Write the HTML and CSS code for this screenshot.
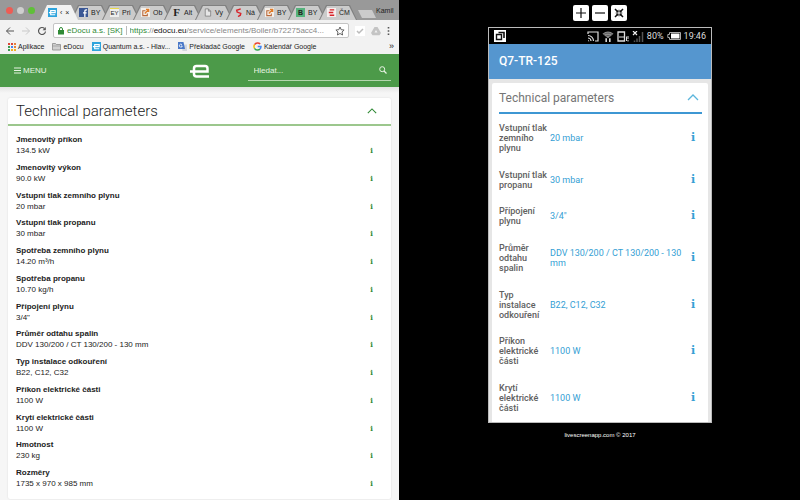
FILE: index.html
```
<!DOCTYPE html>
<html lang="cs">
<head>
  <meta charset="UTF-8">
  <meta name="viewport" content="width=device-width, initial-scale=1.0">
  <title>eDocu a.s. - Technical parameters</title>
  <link rel="stylesheet" href="styles.css">
</head>
<body>
  <svg class="defs" width="0" height="0" aria-hidden="true">
    <symbol id="edocu" viewBox="0 0 10 10">
      <rect width="10" height="10" fill="#2fa4dc"/>
      <path d="M1 5.200h7V3H3v4.500h5" fill="none" stroke="#fff" stroke-width="1.300"/>
    </symbol>
    <symbol id="edit" viewBox="0 0 10 10">
      <rect width="10" height="10" fill="#f4efe9"/>
      <path d="M5 3H2v5.500h5V6" fill="none" stroke="#b8683a" stroke-width="1.200"/>
      <path d="M4.200 6l4-4M5.500 1.500h3v3" fill="none" stroke="#e07b28" stroke-width="1.500"/>
    </symbol>
    <symbol id="chevron" viewBox="0 0 12 7">
      <path d="M1 6l5-5 5 5" fill="none" stroke="currentColor" stroke-width="1.300"/>
    </symbol>
  </svg>

  <main class="split">
    <section class="browser">
      <div class="tab-bar">
        <div class="lights"><span class="light red"></span><span class="light grey"></span><span class="light green"></span></div>
        <div class="tabs">
          <div class="tab active"><svg class="favicon"><use href="#edocu"/></svg><span class="tab-title">‹</span><span class="close">×</span></div>
          <div class="tab"><svg class="favicon" viewBox="0 0 10 10"><rect width="10" height="10" fill="#3a5795"/><path d="M6.500 10V3.500q0-1.500 2.500-1.300M4.500 5.500h4" fill="none" stroke="#fff" stroke-width="1.400"/></svg><span class="tab-title">BY</span></div>
          <div class="tab"><span class="favicon letter ey">EY</span><span class="tab-title">Pri</span></div>
          <div class="tab"><svg class="favicon"><use href="#edit"/></svg><span class="tab-title">Ob</span></div>
          <div class="tab"><span class="favicon letter serif">F</span><span class="tab-title">Alt</span></div>
          <div class="tab"><svg class="favicon" viewBox="0 0 10 10"><path d="M2.500 1h3.500l2.500 2.500V9h-6zM6 1v2.500h2.500" fill="#e6e6e6" stroke="#777" stroke-width=".8"/></svg><span class="tab-title">Vy</span></div>
          <div class="tab"><svg class="favicon" viewBox="0 0 10 10"><path d="M7.500 1L3 2.500l.5 2 4 1.500L7 8 4.500 9.500" fill="none" stroke="#d8232a" stroke-width="1.600"/></svg><span class="tab-title">Ná</span></div>
          <div class="tab"><svg class="favicon"><use href="#edit"/></svg><span class="tab-title">BY</span></div>
          <div class="tab"><span class="favicon letter bold-b">B</span><span class="tab-title">BY</span></div>
          <div class="tab"><svg class="favicon" viewBox="0 0 10 10"><rect width="10" height="10" fill="#f6eeee"/><path d="M3 2h5M2 5h5M3 8h5" stroke="#d8232a" stroke-width="1.500"/></svg><span class="tab-title">ČM</span></div>
          <span class="new-tab"></span>
        </div>
        <span class="user">Kamil</span>
      </div>

      <div class="toolbar">
        <button class="tool" type="button" aria-label="Back"><svg viewBox="0 0 10 10"><path d="M9 5H1.500M5 1.500L1.500 5 5 8.500" fill="none" stroke="#555"/></svg></button>
        <button class="tool" type="button" aria-label="Forward"><svg viewBox="0 0 10 10"><path d="M1 5h7.500M5 1.500L8.500 5 5 8.500" fill="none" stroke="#c9c9c9"/></svg></button>
        <button class="tool" type="button" aria-label="Reload"><svg viewBox="0 0 10 10"><path d="M7.500 2.500A3.500 3.500 0 1 0 8.500 5.500" fill="none" stroke="#555" stroke-width="1.200"/><path d="M8.800 1v3.200H5.600z" fill="#555"/></svg></button>
        <div class="omnibox">
          <svg class="lock" viewBox="0 0 6 8"><rect y="3" width="6" height="4.500" fill="#2f8a35"/><path d="M1.500 3.500V2a1.500 1.500 0 0 1 3 0v1.500" fill="none" stroke="#2f8a35"/></svg>
          <span class="secure">eDocu a.s. [SK]</span>
          <span class="url"><span class="scheme">https:</span>//<span class="host">edocu.eu</span>/service/elements/Boiler/b72275acc4...</span>
          <svg class="star" viewBox="0 0 10 10"><path d="M5 1l1.200 2.700 2.900.3L7 6l.6 3L5 7.500 2.400 9 3 6 .9 4l2.900-.3z" fill="none" stroke="#555" stroke-width=".9"/></svg>
        </div>
        <svg class="ext" viewBox="0 0 10 10"><rect width="10" height="10" fill="#fff"/><path d="M2 5l2 2 4-4" fill="none" stroke="#bbb" stroke-width="1.500"/></svg>
        <svg class="ext" viewBox="0 0 10 10"><path d="M3.500 1h3L10 7 8.500 9.200h-7L0 7z" fill="#c4c4c4"/><path d="M5 4l1.500 2.500h-3z" fill="#f2f2f2"/></svg>
        <svg class="dots" viewBox="0 0 3 10"><path d="M.7 1h1.600v1.600H.7zM.7 4.200h1.600v1.600H.7zM.7 7.400h1.600V9H.7z" fill="#555"/></svg>
      </div>

      <nav class="bookmarks">
        <a href="#"><svg viewBox="0 0 9 9"><path d="M1 1h2v2H1zM4 1h2v2H4z" fill="#dc4437"/><path d="M7 1h2v2H7zM7 4h2v2H7z" fill="#e8803a"/><path d="M1 4h2v2H1zM1 7h2v2H1z" fill="#3a9a50"/><path d="M4 4h2v2H4z" fill="#4285f4"/><path d="M4 7h2v2H4zM7 7h2v2H7z" fill="#f0b020"/></svg>Aplikace</a>
        <a href="#"><svg viewBox="0 0 9 9"><path d="M.5 1.500h3l.8 1h4.200v5.500h-8z" fill="#d0d0d0" stroke="#8c8c8c" stroke-width=".8"/><path d="M.5 4h8" stroke="#8c8c8c" stroke-width=".6"/></svg>eDocu</a>
        <a href="#"><svg><use href="#edocu"/></svg>Quantum a.s. - Hlav...</a>
        <a href="#"><svg viewBox="0 0 9 9"><path d="M3.500 2.500H9V9H4.500z" fill="#d2d6de"/><path d="M0 0h5.500L7 7H0z" fill="#4a78c8"/><path d="M4 2.700a1.500 1.500 0 1 0 .3 1.300H3" fill="none" stroke="#fff" stroke-width=".8"/></svg>Překladač Google</a>
        <a href="#"><svg viewBox="0 0 9 9" fill="none" stroke-width="1.500"><path d="M7.200 2A3.600 3.600 0 0 0 1.500 2.700" stroke="#ea4335"/><path d="M1.500 2.700a3.600 3.600 0 0 0 0 3.600" stroke="#fbbc05"/><path d="M1.500 6.300a3.600 3.600 0 0 0 5.500.8" stroke="#34a853"/><path d="M7 7.100a3.600 3.600 0 0 0 1-2.500H4.700" stroke="#4285f4"/></svg>Kalendář Google</a>
        <span class="more">»</span>
      </nav>

      <header class="site-header">
        <button class="menu" type="button"><svg viewBox="0 0 7 7"><path d="M0 1h7M0 3.500h7M0 6h7" stroke="currentColor"/></svg>MENU</button>
        <svg class="logo" viewBox="0 0 20 14"><path d="M0 7.500h17.500V4.500q0-2.500-2.500-2.500H6.500Q4 2 4 4.500V10q0 2.500 2.500 2.500H19" fill="none" stroke="#fff" stroke-width="2.500"/></svg>
        <form class="search">
          <input type="search" aria-label="Hledat" placeholder="Hledat...">
          <button type="button" aria-label="Search"><svg viewBox="0 0 8 8"><circle cx="3.200" cy="3.200" r="2.500" fill="none" stroke="currentColor"/><path d="M5 5l2.500 2.500" stroke="currentColor" stroke-width="1.200"/></svg></button>
        </form>
      </header>

      <div class="page">
        <article class="card">
          <div class="card-head"><h1>Technical parameters</h1><svg class="chevron"><use href="#chevron"/></svg></div>
          <dl class="params">
            <div class="param"><dt>Jmenovitý příkon</dt><dd>134.5 kW <b class="info">i</b></dd></div>
            <div class="param"><dt>Jmenovitý výkon</dt><dd>90.0 kW <b class="info">i</b></dd></div>
            <div class="param"><dt>Vstupní tlak zemního plynu</dt><dd>20 mbar <b class="info">i</b></dd></div>
            <div class="param"><dt>Vstupní tlak propanu</dt><dd>30 mbar <b class="info">i</b></dd></div>
            <div class="param"><dt>Spotřeba zemního plynu</dt><dd>14.20 m³/h <b class="info">i</b></dd></div>
            <div class="param"><dt>Spotřeba propanu</dt><dd>10.70 kg/h <b class="info">i</b></dd></div>
            <div class="param"><dt>Přípojení plynu</dt><dd>3/4" <b class="info">i</b></dd></div>
            <div class="param"><dt>Průměr odtahu spalin</dt><dd>DDV 130/200 / CT 130/200 - 130 mm <b class="info">i</b></dd></div>
            <div class="param"><dt>Typ instalace odkouření</dt><dd>B22, C12, C32 <b class="info">i</b></dd></div>
            <div class="param"><dt>Příkon elektrické části</dt><dd>1100 W <b class="info">i</b></dd></div>
            <div class="param"><dt>Krytí elektrické části</dt><dd>1100 W <b class="info">i</b></dd></div>
            <div class="param"><dt>Hmotnost</dt><dd>230 kg <b class="info">i</b></dd></div>
            <div class="param"><dt>Rozměry</dt><dd>1735 x 970 x 985 mm <b class="info">i</b></dd></div>
          </dl>
        </article>
      </div>
    </section>

    <section class="stage">
      <div class="zoom-buttons">
        <button type="button" aria-label="Zoom in"><svg viewBox="0 0 16 16"><path d="M3 8h10M8 3v10" stroke="#111" stroke-width="1.200"/></svg></button>
        <button type="button" aria-label="Zoom out"><svg viewBox="0 0 16 16"><path d="M3 8h10" stroke="#111" stroke-width="1.200"/></svg></button>
        <button type="button" aria-label="Fit"><svg viewBox="0 0 16 16"><path d="M4 4l3 3M12 4L9 7M4 12l3-3M12 12L9 9" stroke="#111" stroke-width="1.500"/><path d="M7.500 4.500v3h-3zM8.500 4.500v3h3zM7.500 11.500v-3h-3zM8.500 11.500v-3h3z" fill="#111"/></svg></button>
      </div>

      <div class="phone">
        <div class="status">
          <svg class="app-icon" viewBox="0 0 12 12"><rect width="12" height="12" fill="#fff"/><path d="M2.500 4.500h5v5h-5z" fill="none" stroke="#111" stroke-width="1.400"/><path d="M4.500 2.500h5.500V8" fill="none" stroke="#111" stroke-width="1.600"/></svg>
          <svg class="cast" viewBox="0 0 12 11"><path d="M1 3V1h10v9H8" fill="none" stroke="#ddd" stroke-width="1.200"/><path d="M1 4.500A5.500 5.500 0 0 1 6.500 10M1 7a3 3 0 0 1 3 3" fill="none" stroke="#ddd" stroke-width="1.200"/><path d="M1 8.800l1.400 1.400H1z" fill="#ddd"/></svg>
          <svg class="wifi" viewBox="0 0 12 12"><path d="M0 3q6-5 12 0L6 8z" fill="#8c8c8c"/><path d="M1 4q5-3.500 10 0M3 5.800q3-2 6 0" fill="none" stroke="#333" stroke-width=".6"/><path d="M4 8v4M8 8v4" stroke="#eee" stroke-width="1.600"/></svg>
          <svg class="sim" viewBox="0 0 12 11"><path d="M1 1h6.500v9H1z" fill="none" stroke="#ddd" stroke-width="1.300"/><path d="M2 6h5" stroke="#ddd"/><path d="M9.500 5.500V10M11 5v3M11 9v1.500" stroke="#ddd"/></svg>
          <svg class="signal" viewBox="0 0 12 11"><path d="M1 0l4 4M5 0L1 4" stroke="#eee" stroke-width="1.200"/><path d="M2.500 11V9.500M5 11V7.500M7.500 11V5M10.500 11V1" stroke="#555" stroke-width="1.500"/></svg>
          <span class="percent">80%</span>
          <svg class="battery" viewBox="0 0 14 8"><path d="M2.500.5h11v7h-11V5.500H.8v-3h1.700z" fill="none" stroke="#aaa"/><path d="M4 1.500h8.500v5H4z" fill="#fff"/></svg>
          <time>19:46</time>
        </div>
        <header class="app-bar">Q7-TR-125</header>
        <div class="app-body">
          <article class="app-card">
            <div class="app-head"><h2>Technical parameters</h2><svg class="chevron"><use href="#chevron"/></svg></div>
            <dl class="app-params">
              <div class="app-param"><dt>Vstupní tlak zemního plynu</dt><dd>20 mbar</dd><dd class="app-info">i</dd></div>
              <div class="app-param"><dt>Vstupní tlak propanu</dt><dd>30 mbar</dd><dd class="app-info">i</dd></div>
              <div class="app-param"><dt>Přípojení plynu</dt><dd>3/4"</dd><dd class="app-info">i</dd></div>
              <div class="app-param"><dt>Průměr odtahu spalin</dt><dd>DDV 130/200 / CT 130/200 - 130 mm</dd><dd class="app-info">i</dd></div>
              <div class="app-param"><dt>Typ instalace odkouření</dt><dd>B22, C12, C32</dd><dd class="app-info">i</dd></div>
              <div class="app-param"><dt>Příkon elektrické části</dt><dd>1100 W</dd><dd class="app-info">i</dd></div>
              <div class="app-param"><dt>Krytí elektrické části</dt><dd>1100 W</dd><dd class="app-info">i</dd></div>
            </dl>
          </article>
        </div>
      </div>
      <footer class="credit">livescreenapp.com © 2017</footer>
    </section>
  </main>
</body>
</html>
```

FILE: styles.css
```
* {
  box-sizing: border-box;
}

body {
  margin: 0;
  font-family: "Liberation Sans", Arial, sans-serif;
  font-size: 8px;
  line-height: 11px;
  color: #222;
  background: #000;
}

h1, h2, dl, dd {
  margin: 0;
}

button {
  padding: 0;
  border: none;
  background: none;
  color: inherit;
  font: inherit;
  cursor: pointer;
}

svg {
  display: block;
  flex: none;
}

.defs {
  position: absolute;
}

.split {
  display: grid;
  grid-template-columns: 1fr 1fr;
  min-height: 100vh;
}

/* browser window */
.browser {
  display: flex;
  flex-direction: column;
  min-width: 0;
  margin-right: 1px;
  background: #f2f2f2;
}

.tab-bar {
  display: flex;
  align-items: flex-end;
  height: 20px;
  padding: 0 6px;
  background: #999;
}

.lights {
  display: flex;
  gap: 4px;
  padding: 0 5px 6px 0;
}

.light {
  width: 7px;
  height: 7px;
  border-radius: 50%;
}

.red { background: #ee5c54; }
.grey { background: #cfcfcf; }
.green { background: #5fc038; }

.tabs {
  position: relative;
  z-index: 0;
  display: flex;
  flex: 1;
}

.tab {
  position: relative;
  display: flex;
  align-items: center;
  gap: 3px;
  width: 38px;
  height: 15px;
  margin-right: -7px;
  padding-left: 8px;
  font-size: 7px;
  white-space: nowrap;
}

.tab::before,
.tab::after {
  content: "";
  position: absolute;
  inset: 0;
  z-index: -1;
  background: #808080;
  clip-path: polygon(7px 0, calc(100% - 7px) 0, 100% 100%, 0 100%);
}

.tab::after {
  inset: 1px 1px 0;
  background: #cbcbcb;
}

.active::before,
.active::after {
  z-index: 0;
  background: #f2f2f2;
}

.active > * {
  position: relative;
  z-index: 1;
}

.favicon {
  flex: none;
  width: 9px;
  height: 9px;
}

.letter {
  line-height: 9px;
  text-align: center;
}

.ey {
  font-size: 6px;
  background: #eee;
  border-top: 1px solid #e8d84a;
}

.serif {
  font-family: "Liberation Serif", serif;
  font-size: 11px;
  font-weight: bold;
}

.bold-b {
  background: #55b27c;
  font-weight: bold;
}

.new-tab {
  width: 18px;
  height: 8px;
  margin: 5px 0 0 8px;
  background: #cbcbcb;
  clip-path: polygon(0 0, 14px 0, 100% 100%, 4px 100%);
}

.user {
  padding-bottom: 4px;
  font-size: 7px;
}

.toolbar {
  display: flex;
  align-items: center;
  gap: 6px;
  padding: 3px 9px 0 5px;
}

.tool svg,
.star,
.ext {
  width: 10px;
  height: 10px;
}

.omnibox {
  display: flex;
  flex: 1;
  align-items: center;
  min-width: 0;
  height: 15px;
  padding: 0 3px 0 4px;
  border: 1px solid #c4c4c4;
  border-radius: 2px;
  background: #fff;
  white-space: nowrap;
}

.lock {
  width: 6px;
  height: 8px;
}

.secure {
  margin: 0 3px;
  padding-right: 3px;
  border-right: 1px solid #bbb;
  line-height: 9px;
  color: #2f8a35;
}

.url {
  flex: 1;
  min-width: 0;
  overflow: hidden;
  color: #888;
}

.scheme { color: #2f8a35; }
.host { color: #111; }

.dots {
  width: 3px;
  height: 10px;
}

.bookmarks {
  display: flex;
  align-items: center;
  gap: 8px;
  height: 16px;
  padding: 0 5px 0 7px;
  font-size: 7px;
  white-space: nowrap;
}

.bookmarks a {
  display: flex;
  align-items: center;
  gap: 2px;
  color: #222;
  text-decoration: none;
}

.bookmarks svg {
  width: 9px;
  height: 9px;
}

.more {
  margin-left: auto;
  font-size: 9px;
}

/* green site header */
.site-header {
  display: grid;
  grid-template-columns: 1fr auto 1fr;
  align-items: center;
  height: 33px;
  padding: 0 8px;
  background: #4c9a49;
  color: #e6f2e2;
}

.menu {
  display: flex;
  align-items: center;
  gap: 2px;
  padding-left: 6px;
}

.menu svg {
  width: 7px;
  height: 7px;
}

.logo {
  width: 20px;
  height: 14px;
}

.search {
  display: flex;
  align-items: center;
  height: 20px;
  margin-left: 38px;
  padding: 0 4px 0 6px;
  border-bottom: 1px solid #b4d6ae;
}

.search input {
  flex: 1;
  min-width: 0;
  padding: 0;
  border: none;
  background: none;
  color: inherit;
  font: inherit;
}

.search input::placeholder {
  color: #e6f2e2;
}

.search svg {
  width: 8px;
  height: 8px;
}

.page {
  display: flex;
  flex: 1;
  flex-direction: column;
  padding: 11px 8px 1px;
  background: linear-gradient(#e4e4e4, #f6f6f6 6px);
}

.card {
  display: flex;
  flex: 1;
  flex-direction: column;
  border-radius: 2px;
  background: #fff;
  box-shadow: 0 0 2px rgba(0, 0, 0, 0.12);
}

.card-head {
  display: flex;
  align-items: center;
  justify-content: space-between;
  height: 28px;
  padding: 0 14px 0 8px;
  border-bottom: 2px solid #9cc78d;
  color: #2f8a35;
}

.card-head h1 {
  font-family: Roboto, "Liberation Sans", sans-serif;
  font-size: 15px;
  font-weight: 300;
  line-height: 20px;
  color: #222;
}

.card-head .chevron {
  width: 10px;
  height: 6px;
}

.params {
  display: flex;
  flex: 1;
  flex-direction: column;
  justify-content: space-between;
  padding: 8px 18px 10px 8px;
}

.param dt {
  font-weight: bold;
}

.param dd {
  display: flex;
  justify-content: space-between;
}

.info {
  font-family: "DejaVu Serif", serif;
  font-size: 7px;
  color: #2f8a35;
}

/* phone mirror */
.stage {
  display: flex;
  flex-direction: column;
  align-items: center;
  padding: 5px 0 59px;
  background: #000;
}

.zoom-buttons {
  display: flex;
  gap: 3px;
  padding-bottom: 6px;
}

.zoom-buttons button {
  width: 16px;
  height: 16px;
  border-radius: 2px;
  background: #fff;
}

.phone {
  display: flex;
  flex: 1;
  flex-direction: column;
  width: 56%;
  border: 1px solid #bbb;
  font-family: Roboto, sans-serif;
  background: #e6e6e6;
}

.status {
  display: flex;
  align-items: center;
  gap: 3px;
  height: 16px;
  padding: 0 5px;
  background: #000;
  color: #ddd;
  font-size: 9px;
}

.app-icon {
  width: 12px;
  height: 12px;
  margin-right: auto;
}

.cast,
.wifi,
.sim,
.signal {
  width: 12px;
  height: 11px;
}

.battery {
  width: 14px;
  height: 8px;
}

.app-bar {
  height: 35px;
  padding-left: 10px;
  background: #5596cf;
  color: #fff;
  font-size: 12px;
  font-weight: 500;
  line-height: 35px;
}

.app-body {
  display: flex;
  flex: 1;
  flex-direction: column;
  padding: 4px 3px 0;
}

.app-card {
  display: flex;
  flex: 1;
  flex-direction: column;
  padding: 0 6px 0 7px;
  border-radius: 2px 2px 0 0;
  background: #fff;
}

.app-head {
  display: flex;
  align-items: center;
  justify-content: space-between;
  height: 31px;
  padding-right: 3px;
  border-bottom: 2px solid #3d97d3;
  color: #5bb5dc;
}

.app-head h2 {
  font-size: 12px;
  font-weight: 400;
  line-height: 16px;
  color: #757575;
}

.app-head .chevron {
  width: 12px;
  height: 7px;
}

.app-params {
  display: flex;
  flex: 1;
  flex-direction: column;
  justify-content: space-between;
  padding: 9px 3px 9px 0;
  font-size: 9px;
  line-height: 10px;
}

.app-param {
  display: grid;
  grid-template-columns: 48px 1fr 12px;
  column-gap: 3px;
  align-items: center;
}

.app-param dt {
  font-weight: 500;
  color: #606060;
}

.app-param dd {
  color: #35a0d4;
}

.app-param .app-info {
  font-family: "DejaVu Serif", serif;
  font-size: 11px;
  font-weight: bold;
  text-align: center;
}

.credit {
  padding-top: 7px;
  color: #fff;
  font-size: 6px;
}
```
